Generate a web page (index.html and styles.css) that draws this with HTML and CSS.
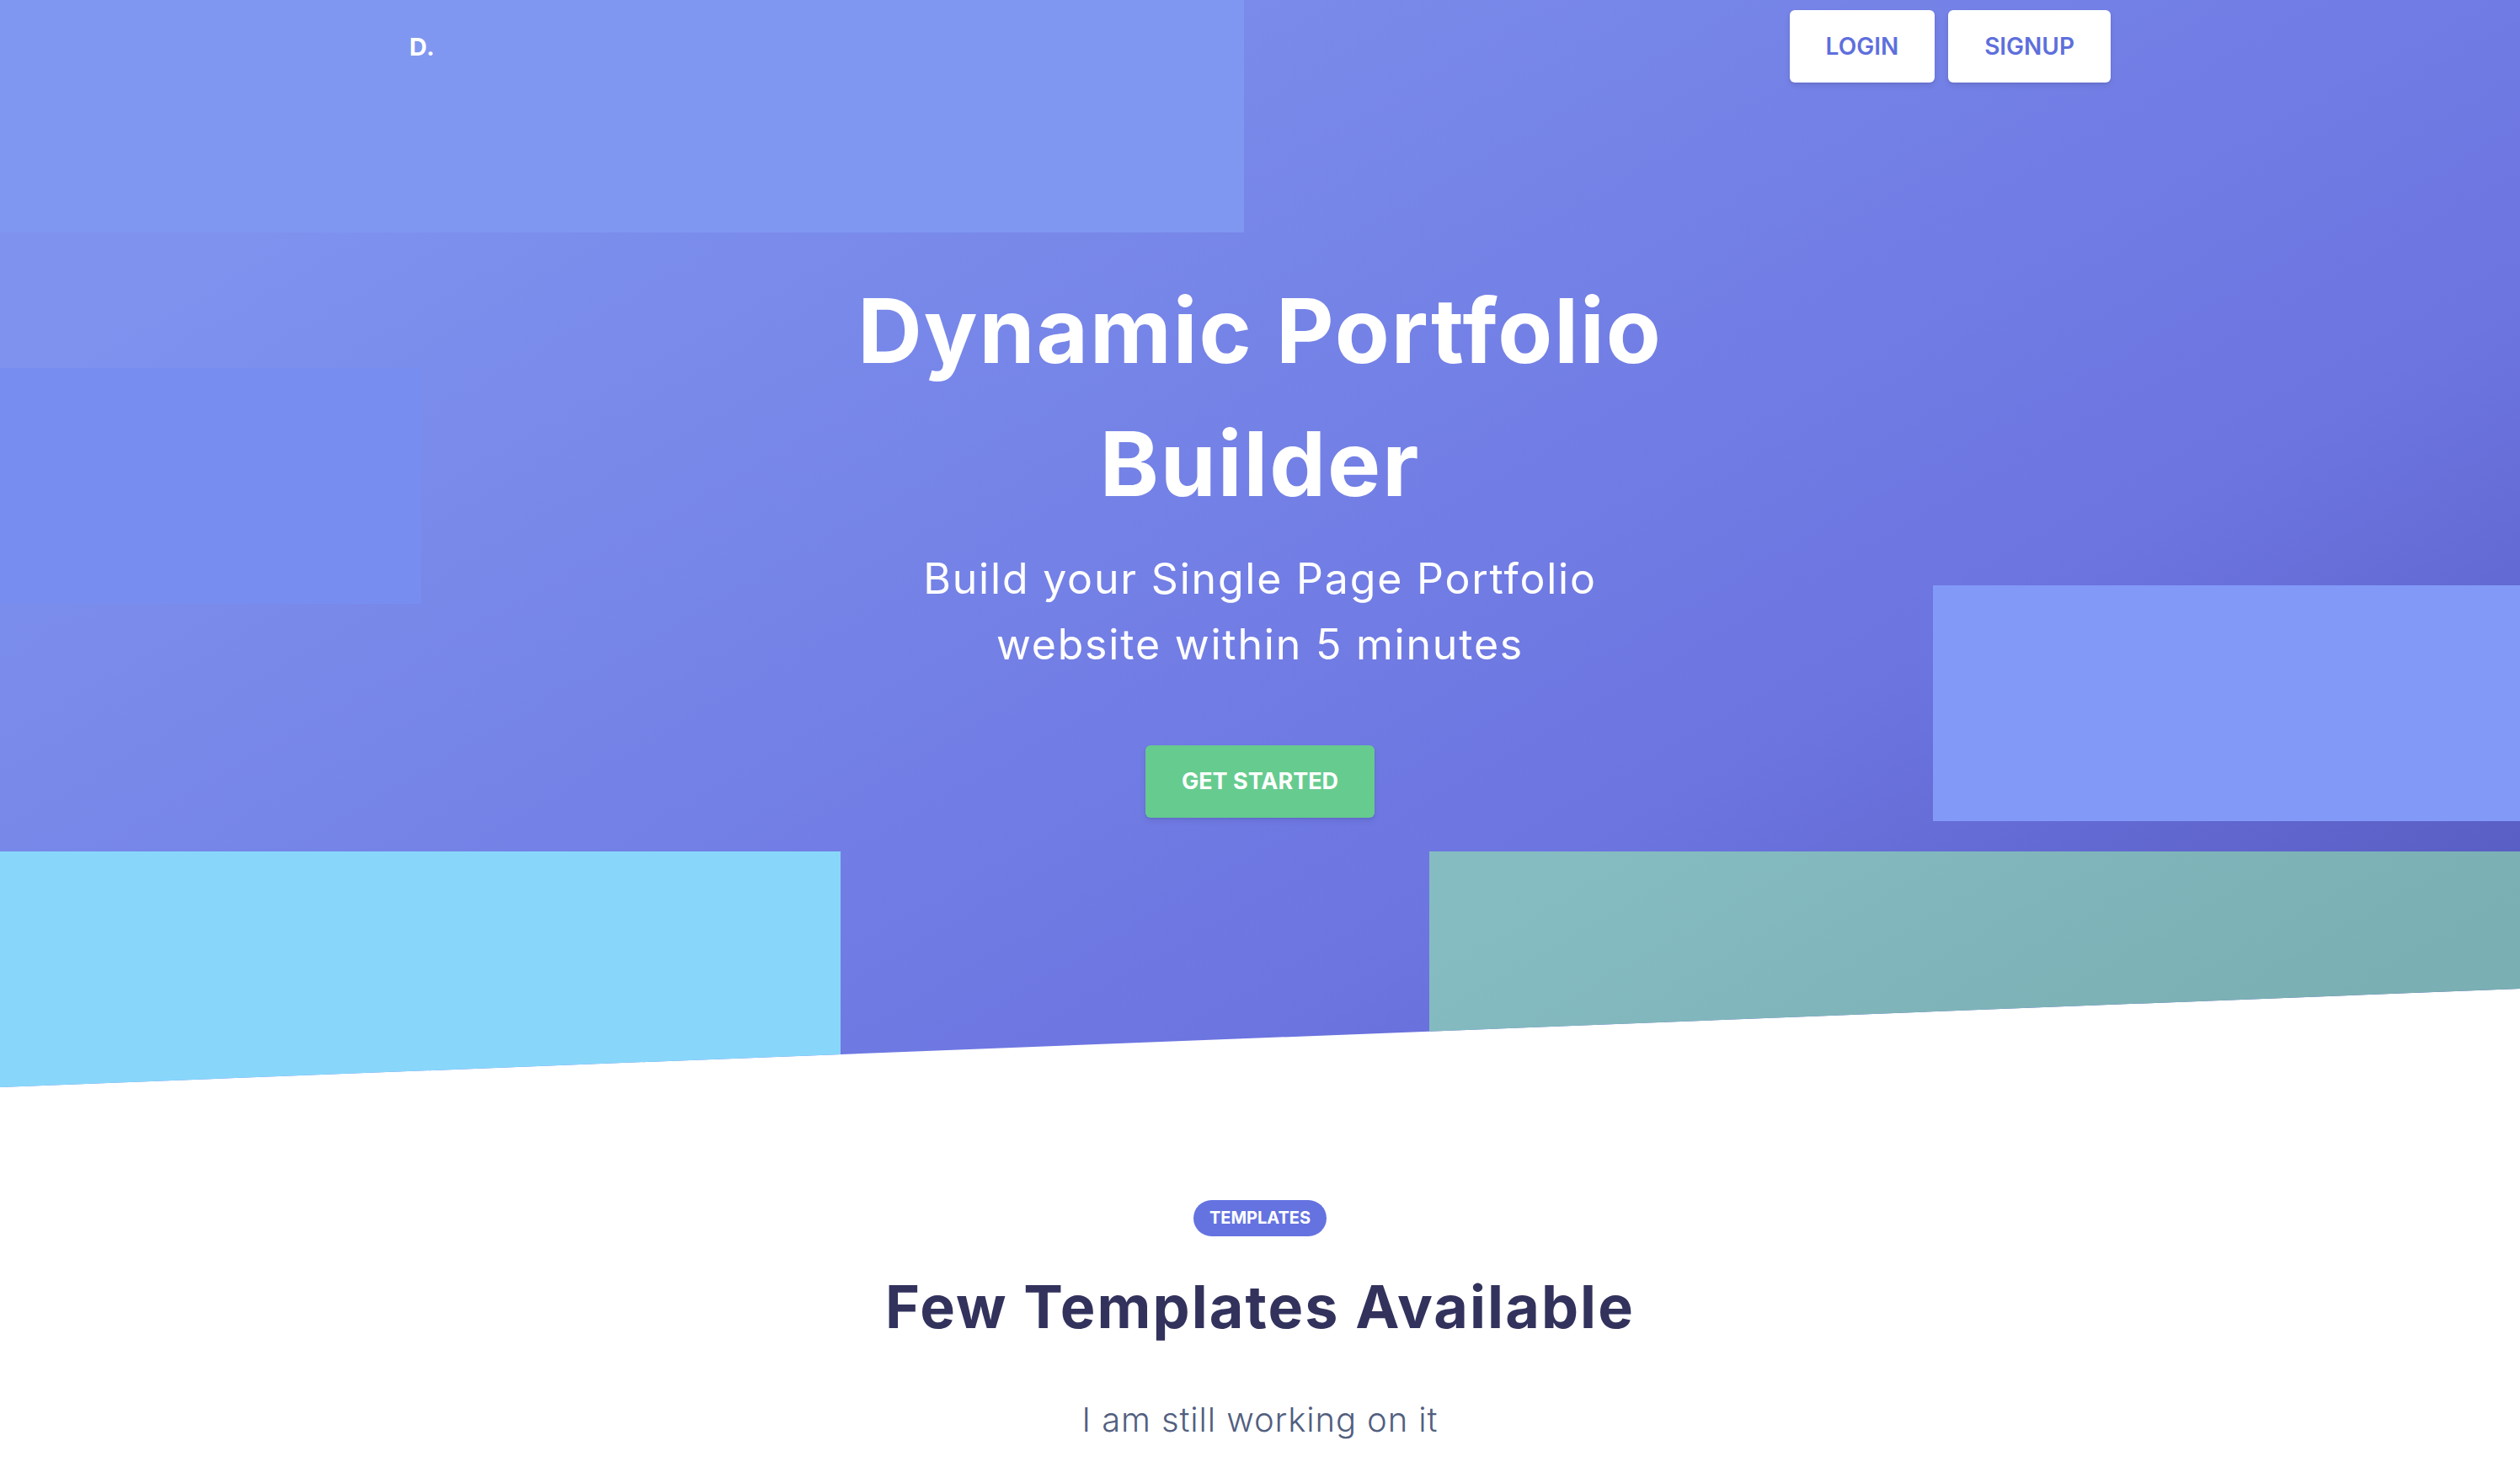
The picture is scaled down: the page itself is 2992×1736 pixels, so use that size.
FILE: index.html
```
<!DOCTYPE html>
<html lang="en">
<head>
<meta charset="utf-8">
<title>Dynamic Portfolio Builder</title>
<link rel="stylesheet" href="styles.css">
</head>
<body>
<section class="hero">
  <div class="shapes" aria-hidden="true">
    <span class="shape shape-top"></span>
    <span class="shape shape-left"></span>
    <span class="shape shape-right"></span>
    <span class="shape shape-bottom-left"></span>
    <span class="shape shape-bottom-right"></span>
  </div>
  <header class="nav">
    <a class="logo" href="#">D.</a>
    <div class="nav-actions">
      <a class="btn btn-white" href="#">Login</a>
      <a class="btn btn-white" href="#">Signup</a>
    </div>
  </header>
  <div class="hero-content">
    <h1 class="hero-title">Dynamic Portfolio Builder</h1>
    <p class="hero-lead">Build your Single Page Portfolio website within 5 minutes</p>
    <a class="btn btn-success" href="#">Get Started</a>
  </div>
</section>
<section class="templates">
  <span class="badge">Templates</span>
  <h2 class="templates-title">Few Templates Available</h2>
  <p class="templates-text">I am still working on it</p>
</section>
</body>
</html>
```
FILE: styles.css
```
* { box-sizing: border-box; }
html, body { margin: 0; padding: 0; }
body {
  font-family: Inter, "Open Sans", "Liberation Sans", sans-serif;
  background: #ffffff;
  color: #525f7f;
}
a { text-decoration: none; }

.hero {
  position: relative;
  height: 1291px;
  background: linear-gradient(150deg, #7e92ee 15%, #6c74e0 70%, #565bbf 94%);
  clip-path: polygon(0 0, 100% 0, 100% 1174px, 0 1291px);
  overflow: hidden;
}
.shapes { position: absolute; inset: 0; z-index: 0; }
.shape { position: absolute; display: block; }
.shape-top { left: 0; top: 0; width: 1477px; height: 276px; background: #7f97f0; }
.shape-left { left: 0; top: 437px; width: 500px; height: 280px; background: #778ef0; }
.shape-right { left: 2295px; right: 0; top: 695px; height: 280px; background: #8299f7; }
.shape-bottom-left { left: 0; top: 1011px; width: 998px; bottom: 0; background: #88d7fb; }
.shape-bottom-right { left: 1697px; right: 0; top: 1011px; bottom: 0; background: linear-gradient(150deg, #85bcc2 10%, #7aafb3 80%); }

.nav {
  position: relative;
  z-index: 1;
  width: 2020px;
  margin: 0 auto;
  padding-top: 12px;
  display: flex;
  align-items: center;
  justify-content: space-between;
}
.logo {
  color: #ffffff;
  font-weight: 700;
  font-size: 29px;
  letter-spacing: 0.5px;
}
.nav-actions { display: flex; gap: 16px; }

.btn {
  display: inline-block;
  font-weight: 600;
  text-transform: uppercase;
  border-radius: 6px;
  line-height: 44px;
  padding: 21px 43px;
  box-shadow: 0 4px 6px rgba(50, 50, 93, 0.11), 0 1px 3px rgba(0, 0, 0, 0.08);
}
.btn-white { background: #ffffff; color: #5e6fdc; font-size: 28px; }
.btn-success { background: #66cb8f; color: #ffffff; font-size: 27px; font-weight: 700; letter-spacing: 0; }

.hero-content {
  position: relative;
  z-index: 1;
  display: flex;
  flex-direction: column;
  align-items: center;
  text-align: center;
  padding-top: 216px;
}
.hero-title {
  margin: 0;
  max-width: 1100px;
  color: #ffffff;
  font-weight: 700;
  font-size: 106px;
  line-height: 158px;
  letter-spacing: 2px;
}
.hero-lead {
  margin: 18px 0 81px;
  max-width: 900px;
  color: #ffffff;
  font-weight: 400;
  font-size: 50px;
  line-height: 78px;
  letter-spacing: 1.8px;
}

.templates {
  display: flex;
  flex-direction: column;
  align-items: center;
  text-align: center;
  padding-top: 134px;
}
.badge {
  display: inline-block;
  background: #6473e0;
  color: #ffffff;
  font-weight: 700;
  font-size: 20px;
  line-height: 25px;
  padding: 9px 19px;
  border-radius: 30px;
  text-transform: uppercase;
}
.templates-title {
  margin: 31px 0 0;
  color: #32325d;
  font-weight: 700;
  font-size: 70px;
  line-height: 105px;
  letter-spacing: 2.1px;
}
.templates-text {
  margin: 48px 0 0;
  color: #525f7f;
  font-weight: 300;
  font-size: 40px;
  line-height: 68px;
  letter-spacing: 0.9px;
}
```
